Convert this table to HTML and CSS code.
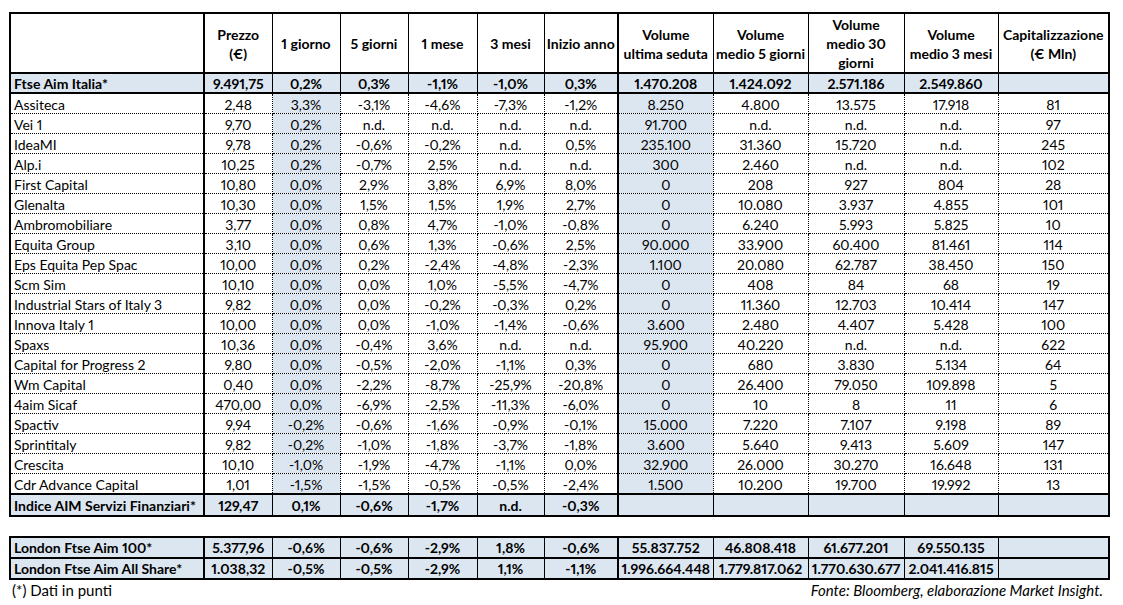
FILE: index.html
```html
<!DOCTYPE html>
<html lang="it">
<head>
<meta charset="utf-8">
<title>AIM Italia - Servizi Finanziari</title>
<link rel="stylesheet" href="styles.css">
</head>
<body>
<div class="sheet">
<table class="grid main">
<colgroup>
<col class="c-name"><col class="c-68"><col class="c-68"><col class="c-68"><col class="c-69"><col class="c-67"><col class="c-74"><col class="c-95"><col class="c-95"><col class="c-96"><col class="c-94"><col class="c-111">
</colgroup>
<thead>
<tr>
<th class="name sep"></th><th>Prezzo<br>(€)</th><th>1 giorno</th><th>5 giorni</th><th>1 mese</th><th>3 mesi</th><th class="sep">Inizio anno</th><th>Volume<br>ultima seduta</th><th>Volume<br>medio 5 giorni</th><th>Volume<br>medio 30<br>giorni</th><th>Volume<br>medio 3 mesi</th><th>Capitalizzazione<br>(€ Mln)</th>
</tr>
</thead>
<tbody>
<tr class="total">
<td class="name sep">Ftse Aim Italia*</td><td>9.491,75</td><td>0,2%</td><td>0,3%</td><td>-1,1%</td><td>-1,0%</td><td class="sep">0,3%</td><td>1.470.208</td><td>1.424.092</td><td>2.571.186</td><td>2.549.860</td><td></td>
</tr>
<tr><td class="name sep">Assiteca</td><td>2,48</td><td class="hl">3,3%</td><td>-3,1%</td><td>-4,6%</td><td>-7,3%</td><td class="sep">-1,2%</td><td class="hl">8.250</td><td>4.800</td><td>13.575</td><td>17.918</td><td>81</td></tr>
<tr><td class="name sep">Vei 1</td><td>9,70</td><td class="hl">0,2%</td><td>n.d.</td><td>n.d.</td><td>n.d.</td><td class="sep">n.d.</td><td class="hl">91.700</td><td>n.d.</td><td>n.d.</td><td>n.d.</td><td>97</td></tr>
<tr><td class="name sep">IdeaMI</td><td>9,78</td><td class="hl">0,2%</td><td>-0,6%</td><td>-0,2%</td><td>n.d.</td><td class="sep">0,5%</td><td class="hl">235.100</td><td>31.360</td><td>15.720</td><td>n.d.</td><td>245</td></tr>
<tr><td class="name sep">Alp.i</td><td>10,25</td><td class="hl">0,2%</td><td>-0,7%</td><td>2,5%</td><td>n.d.</td><td class="sep">n.d.</td><td class="hl">300</td><td>2.460</td><td>n.d.</td><td>n.d.</td><td>102</td></tr>
<tr><td class="name sep">First Capital</td><td>10,80</td><td class="hl">0,0%</td><td>2,9%</td><td>3,8%</td><td>6,9%</td><td class="sep">8,0%</td><td class="hl">0</td><td>208</td><td>927</td><td>804</td><td>28</td></tr>
<tr><td class="name sep">Glenalta</td><td>10,30</td><td class="hl">0,0%</td><td>1,5%</td><td>1,5%</td><td>1,9%</td><td class="sep">2,7%</td><td class="hl">0</td><td>10.080</td><td>3.937</td><td>4.855</td><td>101</td></tr>
<tr><td class="name sep">Ambromobiliare</td><td>3,77</td><td class="hl">0,0%</td><td>0,8%</td><td>4,7%</td><td>-1,0%</td><td class="sep">-0,8%</td><td class="hl">0</td><td>6.240</td><td>5.993</td><td>5.825</td><td>10</td></tr>
<tr><td class="name sep">Equita Group</td><td>3,10</td><td class="hl">0,0%</td><td>0,6%</td><td>1,3%</td><td>-0,6%</td><td class="sep">2,5%</td><td class="hl">90.000</td><td>33.900</td><td>60.400</td><td>81.461</td><td>114</td></tr>
<tr><td class="name sep">Eps Equita Pep Spac</td><td>10,00</td><td class="hl">0,0%</td><td>0,2%</td><td>-2,4%</td><td>-4,8%</td><td class="sep">-2,3%</td><td class="hl">1.100</td><td>20.080</td><td>62.787</td><td>38.450</td><td>150</td></tr>
<tr><td class="name sep">Scm Sim</td><td>10,10</td><td class="hl">0,0%</td><td>0,0%</td><td>1,0%</td><td>-5,5%</td><td class="sep">-4,7%</td><td class="hl">0</td><td>408</td><td>84</td><td>68</td><td>19</td></tr>
<tr><td class="name sep">Industrial Stars of Italy 3</td><td>9,82</td><td class="hl">0,0%</td><td>0,0%</td><td>-0,2%</td><td>-0,3%</td><td class="sep">0,2%</td><td class="hl">0</td><td>11.360</td><td>12.703</td><td>10.414</td><td>147</td></tr>
<tr><td class="name sep">Innova Italy 1</td><td>10,00</td><td class="hl">0,0%</td><td>0,0%</td><td>-1,0%</td><td>-1,4%</td><td class="sep">-0,6%</td><td class="hl">3.600</td><td>2.480</td><td>4.407</td><td>5.428</td><td>100</td></tr>
<tr><td class="name sep">Spaxs</td><td>10,36</td><td class="hl">0,0%</td><td>-0,4%</td><td>3,6%</td><td>n.d.</td><td class="sep">n.d.</td><td class="hl">95.900</td><td>40.220</td><td>n.d.</td><td>n.d.</td><td>622</td></tr>
<tr><td class="name sep">Capital for Progress 2</td><td>9,80</td><td class="hl">0,0%</td><td>-0,5%</td><td>-2,0%</td><td>-1,1%</td><td class="sep">0,3%</td><td class="hl">0</td><td>680</td><td>3.830</td><td>5.134</td><td>64</td></tr>
<tr><td class="name sep">Wm Capital</td><td>0,40</td><td class="hl">0,0%</td><td>-2,2%</td><td>-8,7%</td><td>-25,9%</td><td class="sep">-20,8%</td><td class="hl">0</td><td>26.400</td><td>79.050</td><td>109.898</td><td>5</td></tr>
<tr><td class="name sep">4aim Sicaf</td><td>470,00</td><td class="hl">0,0%</td><td>-6,9%</td><td>-2,5%</td><td>-11,3%</td><td class="sep">-6,0%</td><td class="hl">0</td><td>10</td><td>8</td><td>11</td><td>6</td></tr>
<tr><td class="name sep">Spactiv</td><td>9,94</td><td class="hl">-0,2%</td><td>-0,6%</td><td>-1,6%</td><td>-0,9%</td><td class="sep">-0,1%</td><td class="hl">15.000</td><td>7.220</td><td>7.107</td><td>9.198</td><td>89</td></tr>
<tr><td class="name sep">Sprintitaly</td><td>9,82</td><td class="hl">-0,2%</td><td>-1,0%</td><td>-1,8%</td><td>-3,7%</td><td class="sep">-1,8%</td><td class="hl">3.600</td><td>5.640</td><td>9.413</td><td>5.609</td><td>147</td></tr>
<tr><td class="name sep">Crescita</td><td>10,10</td><td class="hl">-1,0%</td><td>-1,9%</td><td>-4,7%</td><td>-1,1%</td><td class="sep">0,0%</td><td class="hl">32.900</td><td>26.000</td><td>30.270</td><td>16.648</td><td>131</td></tr>
<tr><td class="name sep">Cdr Advance Capital</td><td>1,01</td><td class="hl">-1,5%</td><td>-1,5%</td><td>-0,5%</td><td>-0,5%</td><td class="sep">-2,4%</td><td class="hl">1.500</td><td>10.200</td><td>19.700</td><td>19.992</td><td>13</td></tr>
<tr class="total tallest">
<td class="name sep">Indice AIM Servizi Finanziari*</td><td>129,47</td><td>0,1%</td><td>-0,6%</td><td>-1,7%</td><td>n.d.</td><td class="sep">-0,3%</td><td></td><td></td><td></td><td></td><td></td>
</tr>
</tbody>
</table>

<table class="grid london">
<colgroup>
<col class="c-name"><col class="c-68"><col class="c-68"><col class="c-68"><col class="c-69"><col class="c-67"><col class="c-74"><col class="c-95"><col class="c-95"><col class="c-96"><col class="c-94"><col class="c-111">
</colgroup>
<tbody>
<tr class="total tall">
<td class="name sep">London Ftse Aim 100*</td><td>5.377,96</td><td>-0,6%</td><td>-0,6%</td><td>-2,9%</td><td>1,8%</td><td class="sep">-0,6%</td><td>55.837.752</td><td>46.808.418</td><td>61.677.201</td><td>69.550.135</td><td></td>
</tr>
<tr class="total tall">
<td class="name sep">London Ftse Aim All Share*</td><td>1.038,32</td><td>-0,5%</td><td>-0,5%</td><td>-2,9%</td><td>1,1%</td><td class="sep">-1,1%</td><td>1.996.664.448</td><td>1.779.817.062</td><td>1.770.630.677</td><td>2.041.416.815</td><td></td>
</tr>
</tbody>
</table>

<div class="notes">
<span class="note">(*) Dati in punti</span>
<span class="source">Fonte: Bloomberg, elaborazione Market Insight.</span>
</div>
</div>
</body>
</html>
```
FILE: styles.css
```css
html, body {
  margin: 0;
  padding: 0;
  background: #ffffff;
}

body {
  font-family: Lato, "Open Sans", "Liberation Sans", sans-serif;
  font-size: 14px;
  color: #000000;
  font-variant-numeric: proportional-nums;
}

.sheet {
  width: 1099px;
  margin: 12px 0 0 9px;
}

.grid {
  width: 1099px;
  border-collapse: collapse;
  table-layout: fixed;
  border: 2px solid #000;
}

.c-name { width: 194px; }
.c-68 { width: 68px; }
.c-69 { width: 69px; }
.c-67 { width: 67px; }
.c-74 { width: 74px; }
.c-95 { width: 95px; }
.c-96 { width: 96px; }
.c-94 { width: 94px; }
.c-111 { width: 111px; }

.grid th,
.grid td {
  padding: 1px 2px 0;
  text-align: center;
  vertical-align: middle;
  white-space: nowrap;
  overflow: hidden;
}

.grid td {
  padding-top: 2px;
  line-height: 17px;
  border: 1px dotted #000;
}

.grid th {
  font-weight: bold;
  line-height: 19px;
  border: 1px solid #000;
  border-bottom: 2px solid #000;
}

.grid .name {
  text-align: left;
  padding-left: 3px;
}

.grid .sep {
  border-right: 2px solid #000;
}

.grid td.hl {
  background: #dce6f1;
}

.grid tr.total td {
  background: #dce6f1;
  font-weight: bold;
  padding-top: 1px;
  line-height: 17px;
  border-top: 2px solid #000;
  border-bottom: 2px solid #000;
  border-left: 1px solid #000;
  border-right: 1px solid #000;
}

.grid tr.tall td {
  line-height: 18px;
}

.grid tr.tallest td {
  line-height: 19px;
}

.grid tr.total td.sep {
  border-right: 2px solid #000;
}

.london {
  margin-top: 19px;
}

.notes {
  display: flex;
  justify-content: space-between;
  padding: 1px 5px 0 3px;
  font-size: 15px;
  line-height: 19px;
}

.source {
  font-style: italic;
}
```
